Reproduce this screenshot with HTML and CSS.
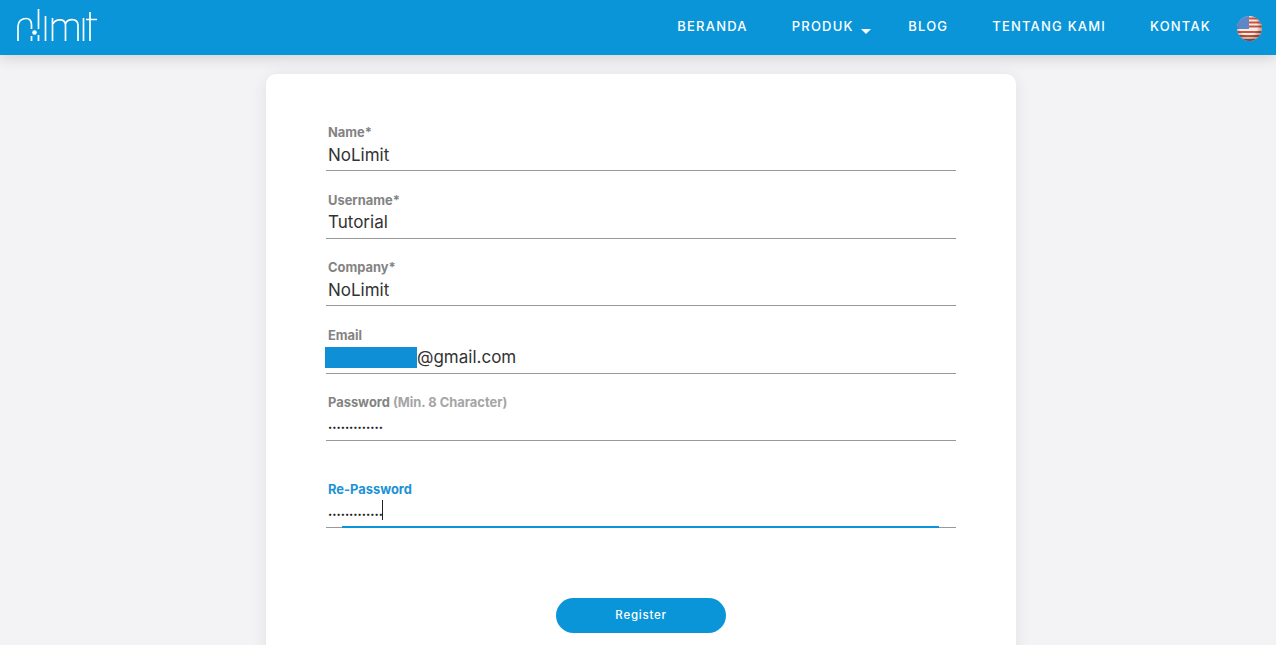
FILE: index.html
```html
<!DOCTYPE html>
<html lang="en">
<head>
  <meta charset="UTF-8">
  <meta name="viewport" content="width=device-width, initial-scale=1.0">
  <title>Register</title>
  <link rel="stylesheet" href="styles.css">
</head>
<body>
  <header class="navbar">
    <a class="logo" href="#" aria-label="nolimit">
      <svg width="84" height="36" viewBox="0 0 84 36" fill="none" stroke="#fff" stroke-width="1.7">
        <path d="M2 33V18C2 13 6 10.500 10 10.500C13.500 10.500 15.500 13 15.500 17V21"/>
        <path d="M15.500 28V33"/>
        <circle cx="18.500" cy="24.500" r="2.300" fill="#fff" stroke="none"/>
        <path d="M22.500 1V21M22.500 27V33"/>
        <path d="M29.500 8V33"/>
        <path d="M36.500 10V33"/>
        <path d="M37 16C39 11 49 9.500 49.500 17V33M49.500 16C51 10.500 61.500 9.500 62 17V33"/>
        <path d="M67.500 10V33"/>
        <path d="M74 4V33M70 11.500H81"/>
      </svg>
    </a>
    <nav class="nav-links">
      <a href="#">Beranda</a>
      <a href="#" class="has-caret">Produk <span class="caret"></span></a>
      <a href="#">Blog</a>
      <a href="#">Tentang Kami</a>
      <a href="#">Kontak</a>
      <svg class="flag" width="25" height="25" viewBox="0 0 25 25">
        <defs>
          <clipPath id="globe"><circle cx="12.500" cy="12.500" r="12.500"/></clipPath>
          <radialGradient id="shade" cx="45%" cy="40%" r="60%">
            <stop offset="60%" stop-color="#000" stop-opacity="0"/>
            <stop offset="100%" stop-color="#402020" stop-opacity="0.45"/>
          </radialGradient>
        </defs>
        <g clip-path="url(#globe)">
          <rect width="25" height="25" fill="#f4ece6"/>
          <path d="M12 2.500H25M12 6.500H25M12 10.500H25M0 16H25M0 20H25M0 24H25" stroke="#c9543c" stroke-width="2"/>
          <rect width="12" height="13" fill="#5f86c9"/>
          <rect width="25" height="25" fill="url(#shade)"/>
        </g>
      </svg>
    </nav>
  </header>

  <main class="card">
    <form class="register-form">
      <div class="field">
        <label for="name">Name*</label>
        <input type="text" id="name" value="NoLimit">
      </div>
      <div class="field">
        <label for="username">Username*</label>
        <input type="text" id="username" value="Tutorial">
      </div>
      <div class="field">
        <label for="company">Company*</label>
        <input type="text" id="company" value="NoLimit">
      </div>
      <div class="field">
        <label for="email">Email</label>
        <input type="text" id="email" class="email-input" value="@gmail.com">
        <span class="redacted"></span>
      </div>
      <div class="field">
        <label for="password">Password <span class="hint">(Min. 8 Character)</span></label>
        <input type="password" id="password" value="passwordvalue">
      </div>
      <div class="field field-active">
        <label for="repassword">Re-Password</label>
        <input type="password" id="repassword" value="passwordvalue">
        <span class="text-caret"></span>
        <span class="focus-line"></span>
      </div>
      <div class="actions">
        <button type="button">Register</button>
      </div>
    </form>
  </main>
</body>
</html>
```
FILE: styles.css
```css
html, body {
  height: 100%;
}

body {
  margin: 0;
  overflow: hidden;
  background-color: #f3f3f5;
  font-family: Inter, "Liberation Sans", sans-serif;
  color: #333;
}

.navbar {
  height: 55px;
  display: flex;
  align-items: center;
  justify-content: space-between;
  padding: 0 14px 0 16px;
  background-color: #0a95d9;
  box-shadow: 0 2px 14px rgba(0, 0, 0, 0.16);
}

.logo {
  display: flex;
  height: 36px;
  margin-top: -3px;
}

.nav-links {
  display: flex;
  align-items: center;
  gap: 44px;
}

.nav-links a {
  color: #fff;
  text-decoration: none;
  text-transform: uppercase;
  font-size: 13px;
  font-weight: 500;
  letter-spacing: 1.200px;
  margin-top: -3px;
}

.has-caret {
  margin-right: -7px;
}

.caret {
  display: inline-block;
  width: 0;
  height: 0;
  margin-left: 3px;
  border-top: 5px solid #fff;
  border-left: 5px solid transparent;
  border-right: 5px solid transparent;
  vertical-align: -3px;
}

.flag {
  margin: 2px 0 0 -18px;
}

.card {
  width: 630px;
  margin: 19px 0 0 266px;
  padding: 50px 60px 60px;
  background-color: #fff;
  border-radius: 10px;
  box-shadow: 0 2px 16px rgba(0, 0, 0, 0.08);
}

.field {
  position: relative;
  margin-bottom: 20.5px;
}

.field label {
  display: block;
  height: 16px;
  padding-left: 2px;
  font-size: 12.900px;
  line-height: 17px;
  font-weight: 700;
  color: #838383;
}

.hint {
  color: #a5a5a5;
}

.field input {
  display: block;
  width: 100%;
  height: 31px;
  box-sizing: border-box;
  padding: 0 2px 1px;
  border: none;
  border-bottom: 1px solid #999;
  outline: none;
  background: none;
  font-family: inherit;
  font-size: 17px;
  color: #333;
}

.field input[type="password"] {
  padding-top: 6px;
  font-size: 7.500px;
  color: #222;
}

.email-input.email-input {
  padding-left: 91px;
}

.redacted {
  position: absolute;
  left: -1px;
  top: 20px;
  width: 92px;
  height: 21px;
  background-color: #0f8fd6;
}

.field-active {
  margin-top: 40px;
}

.field-active label {
  color: #1b92d6;
}

.text-caret {
  position: absolute;
  left: 56px;
  top: 19px;
  width: 1px;
  height: 20px;
  background-color: #222;
}

.focus-line {
  position: absolute;
  left: 16px;
  right: 17px;
  bottom: 0;
  height: 2px;
  background-color: #0a95d9;
}

.actions {
  display: flex;
  justify-content: center;
  margin-top: 70px;
}

.actions button {
  width: 170px;
  height: 35px;
  padding-bottom: 2px;
  border: none;
  border-radius: 18px;
  background-color: #0a95d9;
  color: #fff;
  font-family: inherit;
  font-size: 11.500px;
  font-weight: 500;
  letter-spacing: 0.750px;
  cursor: pointer;
}
```
